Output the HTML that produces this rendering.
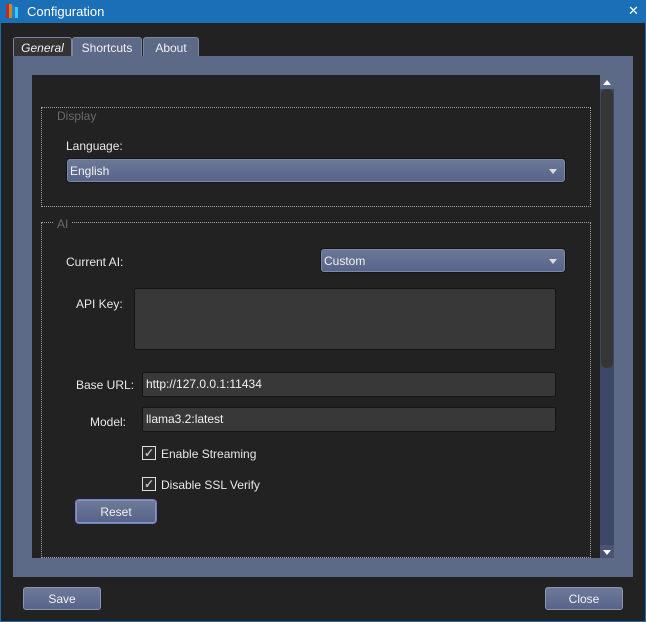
<!DOCTYPE html>
<html><head><meta charset="utf-8"><style>
*{box-sizing:border-box;margin:0;padding:0}
body{width:646px;height:622px;background:#1e6db3;font-family:"Liberation Sans",sans-serif;font-size:12px;color:#e8e8e8;position:relative;overflow:hidden}
.a{position:absolute}
.win{left:1px;top:23px;width:644px;height:598px;background:#222}
.title{left:0;top:0;width:646px;height:23px;background:#1b6fb6;color:#fff;font-size:13px}
.tab{top:37px;height:20px;background:#5d6a87;border:1px solid #7a86a0;border-bottom:none;border-radius:3px 3px 0 0;text-align:center;line-height:20px;font-size:12px;color:#f0f0f0}
.frame{left:13px;top:56px;width:620px;height:521px;background:#5d6a87}
.inner{left:32px;top:75px;width:568px;height:483px;background:#222}
.grp{border:1px dotted #a0a0a0}
.gt{color:#6a6a6a;background:#222;padding:0 3px;font-size:12px}
.combo{height:23px;background:linear-gradient(#6b7896,#58648a);border:1px solid #7b87a3;border-radius:3px;box-shadow:0 0 0 1px #151515;line-height:22px;padding-left:2px;color:#f2f2f2}
.arr{position:absolute;right:7px;top:9px;width:0;height:0;border-left:4px solid transparent;border-right:4px solid transparent;border-top:5px solid #ddd}
.edit{background:#383838;border:1px solid #151515;border-radius:2px;line-height:23px;padding-left:3px;color:#f0f0f0}
.cb{width:14px;height:14px;border:1px solid #ddd;background:#2a2a2a;font-size:12px;line-height:12px;text-align:center;color:#bbb;font-weight:bold}
.btn{height:23px;background:linear-gradient(#6d7a98,#57638a);border:1px solid #8a96b3;border-radius:3px;text-align:center;line-height:22px;color:#f2f2f2}
</style></head><body>
<div class="a title"><span class="a" style="left:6px;top:4px;width:3px;height:14px;background:#a33"></span><span class="a" style="left:9px;top:4px;width:3px;height:14px;background:#c82"></span><span class="a" style="left:12px;top:5px;width:3px;height:13px;background:#2a7ad0"></span><span class="a" style="left:15px;top:7px;width:3px;height:11px;background:#3cf"></span><span class="a" style="left:27px;top:4px">Configuration</span><span class="a" style="left:628px;top:3px;font-size:13px">✕</span></div>
<div class="a win"></div>
<div class="a tab" style="left:13px;width:59px;background:#333;font-style:italic;height:21px">General</div>
<div class="a tab" style="left:72px;width:70px">Shortcuts</div>
<div class="a tab" style="left:143px;width:56px">About</div>
<div class="a frame"></div>
<div class="a inner"></div>
<div class="a grp" style="left:41px;top:107px;width:550px;height:100px"></div>
<div class="a gt" style="left:54px;top:109px">Display</div>
<div class="a" style="left:66px;top:139px">Language:</div>
<div class="a combo" style="left:67px;top:159px;width:498px">English<span class="arr"></span></div>
<div class="a grp" style="left:41px;top:222px;width:550px;height:336px"></div>
<div class="a gt" style="left:54px;top:217px">AI</div>
<div class="a" style="left:66px;top:255px">Current AI:</div>
<div class="a combo" style="left:321px;top:249px;width:244px">Custom<span class="arr"></span></div>
<div class="a" style="left:76px;top:297px">API Key:</div>
<div class="a edit" style="left:134px;top:288px;width:422px;height:62px"></div>
<div class="a" style="left:76px;top:378px">Base URL:</div>
<div class="a edit" style="left:142px;top:372px;width:414px;height:25px">http://127.0.0.1:11434</div>
<div class="a" style="left:90px;top:415px">Model:</div>
<div class="a edit" style="left:142px;top:407px;width:414px;height:25px">llama3.2:latest</div>
<div class="a cb" style="left:142px;top:446px">✓</div>
<div class="a" style="left:161px;top:447px">Enable Streaming</div>
<div class="a cb" style="left:142px;top:477px">✓</div>
<div class="a" style="left:161px;top:478px">Disable SSL Verify</div>
<div class="a btn" style="left:76px;top:500px;width:80px;box-shadow:0 0 0 1px #6f7fd0">Reset</div>
<div class="a" style="left:600px;top:75px;width:14px;height:483px;background:#3d4866"></div>
<div class="a" style="left:600px;top:75px;width:14px;height:14px;background:#5d6a87"></div>
<div class="a" style="left:603px;top:80px;border-left:4px solid transparent;border-right:4px solid transparent;border-bottom:5px solid #fff"></div>
<div class="a" style="left:601px;top:89px;width:12px;height:279px;background:#363636;border-radius:5px"></div>
<div class="a" style="left:600px;top:545px;width:14px;height:13px;background:#4a5574"></div>
<div class="a" style="left:603px;top:550px;border-left:4px solid transparent;border-right:4px solid transparent;border-top:5px solid #fff"></div>
<div class="a btn" style="left:23px;top:587px;width:78px">Save</div>
<div class="a btn" style="left:545px;top:587px;width:78px">Close</div>
</body></html>
